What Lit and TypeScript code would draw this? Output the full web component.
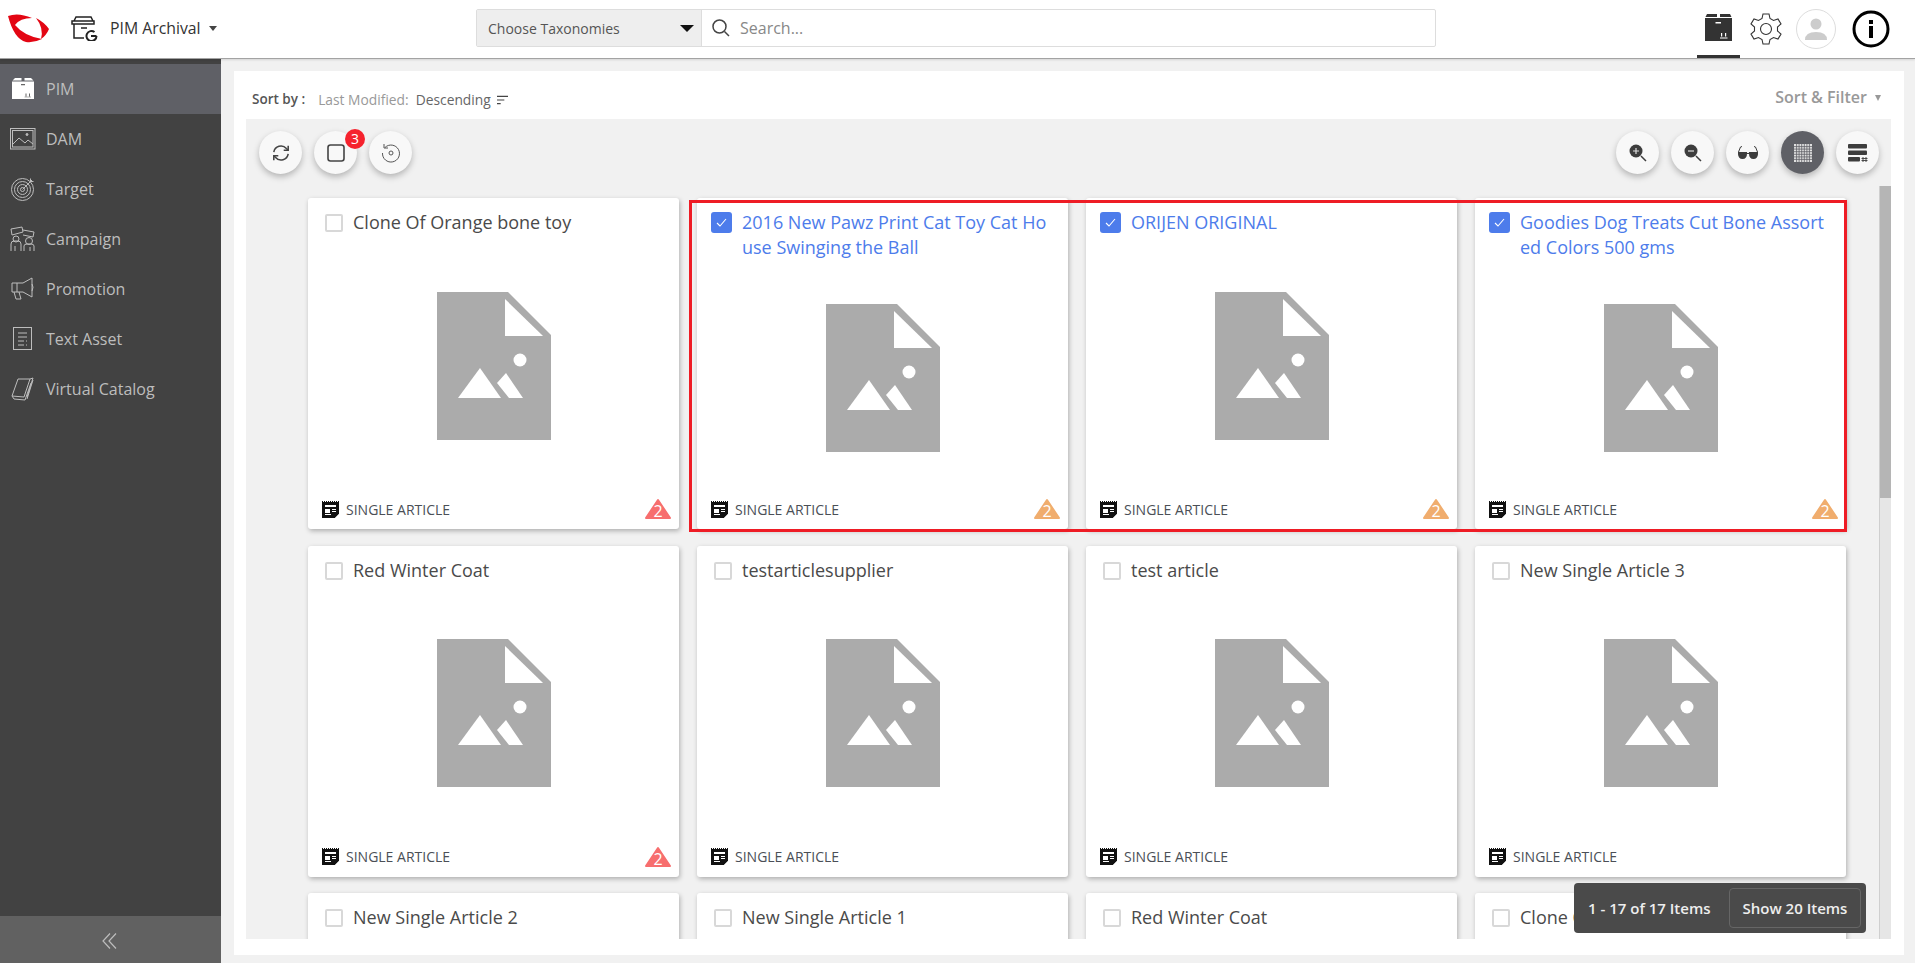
import { LitElement, html, css } from "lit";
import { customElement, property } from "lit/decorators.js";

const noImage = html`<svg class="noimg" viewBox="0 0 114 148" width="114" height="148">
  <path fill="#ababab" d="M0 0H71L114 43V148H0Z"/>
  <path fill="#fff" d="M68 7L106 44H68Z"/>
  <circle fill="#fff" cx="83" cy="68" r="6.5"/>
  <path fill="#fff" d="M21 106L43 76L64 106Z"/>
  <path fill="#fff" d="M60 91L69 81L86 106H72Z"/>
</svg>`;

const articleIcon = html`<svg viewBox="0 0 17 17" width="17" height="17">
  <path fill="#111" d="M0 1H17V13L13 17H0Z"/>
  <path d="M0 .5H17" stroke="#111" stroke-dasharray="1 1"/>
  <path fill="#fff" d="M3 4H14V6H3ZM3 8H8V12H3ZM10 8H14V9H10ZM10 10H14V11H10ZM3 13H9V14H3Z"/>
  <path fill="#fff" d="M17 13V17H13Z"/>
</svg>`;

@customElement("pim-card")
class PimCard extends LitElement {
  @property() name = "";
  @property({ type: Boolean }) selected = false;
  @property() badge = "";
  static styles = css`
    :host { display: block; }
    .card {
      height: 331px; background: #fff; border-radius: 3px;
      box-shadow: 1px 2px 5px rgba(0,0,0,.28);
      display: flex; flex-direction: column; box-sizing: border-box;
      font-family: "Open Sans", sans-serif;
    }
    .head { display: flex; gap: 10px; padding: 12px 18px 0 17px; }
    .box {
      flex: none; width: 18px; height: 18px; margin-top: 4px; box-sizing: border-box;
      border: 2px solid #d8d8d8; border-radius: 2px; background: #fff;
      display: flex; align-items: center; justify-content: center;
    }
    .sel .box { width: 21px; height: 21px; margin-top: 2px; margin-left: -3px; border: 0; background: #4d7ceb; border-radius: 3px; }
    .title { font-size: 18px; line-height: 25px; color: #4a4a4a; word-break: break-all; min-width: 0; font-weight: 400; }
    .sel .title { color: #4d7ceb; }
    .body { flex: 1; display: flex; align-items: center; justify-content: center; min-height: 0; }
    .foot { height: 33px; flex: none; display: flex; align-items: center; gap: 7px; padding: 0 8px 7px 14px; position: relative; box-sizing: border-box; }
    .type { font-size: 14px; color: #4b4f56; }
    .tri { position: absolute; right: 8px; top: 2px; width: 26px; height: 22px; }
    .tri span { position: absolute; inset: 4px 0 0 0; text-align: center; color: #fff; font-size: 16px; line-height: 18px; }
    svg { display: block; }
  `;
  render() {
    const col = this.badge === "red" ? "#f76e6e" : "#f0ad6e";
    return html`<div class="card ${this.selected ? "sel" : ""}">
      <div class="head">
        <div class="box">${this.selected ? html`<svg viewBox="0 0 21 21" width="21" height="21"><path d="M6 11l3 3 6-7" fill="none" stroke="#fff" stroke-width="1.1"/></svg>` : ""}</div>
        <div class="title">${this.name}</div>
      </div>
      <div class="body">${noImage}</div>
      <div class="foot">${articleIcon}<span class="type">SINGLE ARTICLE</span>
        ${this.badge ? html`<div class="tri"><svg viewBox="0 0 26 22" width="26" height="22"><path fill="${col}" stroke="${col}" stroke-width="2" stroke-linejoin="round" d="M13 2L25 20H1Z"/></svg><span>2</span></div>` : ""}
      </div>
    </div>`;
  }
}

const navIcons: Record<string, any> = {
  PIM: html`<svg viewBox="0 0 22 22" width="22" height="22"><path fill="#fff" d="M3 0H9.5V2.5H0.5ZM12.5 0H19L21.5 2.5H12.5ZM0 3.5H22V21H0Z"/><path fill="#666" d="M9 6H13V7.2H9ZM13.5 15.5h1v3h-1ZM17 15.5h1v3h-1ZM12.5 18.7h6.5v.6h-6.5Z"/></svg>`,
  DAM: html`<svg viewBox="0 0 26 22" width="26" height="22" fill="none" stroke="#bdbdbd" stroke-width="1"><rect x=".5" y=".5" width="24.5" height="20.5"/><rect x="2.5" y="2.5" width="20.500" height="16.500"/><path d="M3 16l6-6 6 5 3-3 5 4"/><circle cx="17" cy="6.500" r="1" fill="#bdbdbd"/></svg>`,
  Target: html`<svg viewBox="0 0 24 24" width="24" height="24" fill="none" stroke="#bdbdbd" stroke-width="1"><circle cx="11.500" cy="12.500" r="11"/><circle cx="11.500" cy="12.500" r="8"/><circle cx="11.500" cy="12.500" r="5"/><circle cx="11.500" cy="12.500" r="2"/><path d="M11.500 12.500L21 3M19.500 1.500v3h3"/></svg>`,
  Campaign: html`<svg viewBox="0 0 26 26" width="26" height="26" fill="none" stroke="#bdbdbd" stroke-width="1"><path d="M1 3l11-2 1 5-11 3zM13 4l11 2-1 5-10-2"/><circle cx="6" cy="13" r="3"/><circle cx="19" cy="15" r="3.500"/><path d="M1 25v-7q0-3 3-3h4q3 0 3 3v7M5 25v-5M14 25v-5q0-2 3-2h4q3 0 3 2v5M20 25v-4"/></svg>`,
  Promotion: html`<svg viewBox="0 0 24 24" width="24" height="24" fill="none" stroke="#bdbdbd" stroke-width="1"><path d="M1 6h11l9-5v19l-9-5H1zM6 6v9M3 15l2 7h5l-2-7"/><path d="M21 7q2 3 0 7"/></svg>`,
  "Text Asset": html`<svg viewBox="0 0 20 24" width="20" height="24" fill="none" stroke="#bdbdbd" stroke-width="1"><rect x=".5" y=".5" width="18" height="22"/><path d="M5 6h9M5 10h9M5 14h6M13 14h1M5 18h6M13 18h1"/></svg>`,
  "Virtual Catalog": html`<svg viewBox="0 0 24 24" width="24" height="24" fill="none" stroke="#bdbdbd" stroke-width="1"><path d="M7 2h12L13 20 1 19zM1 19l2 3 11 1 6-17M19 2l3-1-6 19M22 3l-6 19"/></svg>`,
};

const refreshIcon = html`<svg viewBox="0 0 20 20" width="18" height="18" fill="none" stroke="#444" stroke-width="1.700"><path d="M2 9a8 8 0 0 1 14-4l2 2M18 11a8 8 0 0 1-14 4l-2-2"/><path d="M18 2v5h-5M2 18v-5h5"/></svg>`;
const squareIcon = html`<svg viewBox="0 0 18 18" width="18" height="18"><rect x="1" y="1" width="16" height="16" rx="2.500" fill="none" stroke="#444" stroke-width="1.600"/></svg>`;
const historyIcon = html`<svg viewBox="0 0 20 20" width="20" height="20" fill="none" stroke="#555" stroke-width="1"><path d="M4 4.500A8.500 8.500 0 1 1 1.500 10"/><path d="M3 1v4h4"/><circle cx="10" cy="10" r="2"/></svg>`;
const zoomInIcon = html`<svg viewBox="0 0 18 18" width="18" height="18"><circle cx="7" cy="7" r="6.500" fill="#3d3d3d"/><path d="M12 12l5 5" stroke="#3d3d3d" stroke-width="1.500"/><path d="M4 7h6M7 4v6" stroke="#ddd" stroke-width="1.200"/></svg>`;
const zoomOutIcon = html`<svg viewBox="0 0 18 18" width="18" height="18"><circle cx="7" cy="7" r="6.500" fill="#3d3d3d"/><path d="M12 12l5 5" stroke="#3d3d3d" stroke-width="1.500"/><path d="M4 7h6" stroke="#ddd" stroke-width="1.200"/></svg>`;
const glassesIcon = html`<svg viewBox="0 0 20 13" width="20" height="13"><path fill="#3d3d3d" d="M0 6H9Q9.500 13 4.500 13Q-.5 13 0 6ZM11 6H20Q20.500 13 15.500 13Q10.500 13 11 6ZM8 7h4v1H8Z"/><path d="M.5 6L2.500 1L4 .5M19.500 6L17.500 1L16 .5" stroke="#3d3d3d" fill="none"/></svg>`;
const gridIcon = html`<svg viewBox="0 0 18 18" width="18" height="18"><rect width="18" height="18" fill="#e0e0e0"/><path d="M2.600 0v18M5.100 0v18M7.700 0v18M10.300 0v18M12.900 0v18M15.400 0v18M0 2.600h18M0 5.100h18M0 7.700h18M0 10.300h18M0 12.900h18M0 15.400h18" stroke="#5f6066" stroke-width=".8"/></svg>`;
const listIcon = html`<svg viewBox="0 0 20 18" width="20" height="18"><rect width="19" height="4.500" rx="1" fill="#3d3d3d"/><rect y="6.500" width="19" height="4.500" rx="1" fill="#3d3d3d"/><rect y="13" width="12" height="4.500" rx="1" fill="#3d3d3d"/><path d="M15 13v5M18 13v5M13.500 14.500h6M13.500 16.500h6" stroke="#3d3d3d" stroke-width=".9"/></svg>`;

@customElement("app-root")
class AppRoot extends LitElement {
  static styles = css`
    :host { display: flex; flex-direction: column; height: 963px; width: 1915px; overflow: hidden; font-family: "Open Sans", sans-serif; background: #f1f1f1; }
    svg { display: block; flex: none; }
    header { height: 59px; box-sizing: border-box; flex: none; background: #fff; border-bottom: 1px solid #a3a3a3; box-shadow: 0 1px 2px rgba(0,0,0,.12); display: flex; align-items: center; position: relative; z-index: 2; }
    .brand { width: 476px; display: flex; align-items: center; padding: 0 0 0 8px; box-sizing: border-box; margin-bottom: 2px; }
    .app-ico { margin-left: 21px; }
    .app-name { margin-left: 12px; font-size: 15.800px; color: #333; }
    .caret { margin-left: 8px; width: 0; height: 0; border: 4.500px solid transparent; border-top: 5px solid #444; border-bottom: 0; }
    .search { width: 960px; height: 38px; margin-bottom: 2px; box-sizing: border-box; border: 1px solid #ddd; border-radius: 2px; display: flex; align-items: stretch; }
    .tax { width: 225px; flex: none; background: #eee; border-right: 1px solid #ddd; display: flex; align-items: center; justify-content: space-between; padding: 0 6px 0 11px; box-sizing: border-box; font-size: 14px; color: #555; }
    .tax i { width: 0; height: 0; border: 7px solid transparent; border-top: 7px solid #111; border-bottom: 0; margin-right: 1px; }
    .q { display: flex; align-items: center; gap: 10px; padding-left: 10px; font-size: 16px; color: #888; }
    .tools { flex: 1; display: flex; align-items: center; height: 58px; padding-left: 261px; box-sizing: border-box; }
    .tab { width: 43px; height: 58px; box-sizing: border-box; border-bottom: 3px solid #333; display: flex; justify-content: center; align-items: center; }
    .gear { margin-left: 10px; }
    .avatar { margin-left: 14px; width: 40px; height: 40px; box-sizing: border-box; border: 1px solid #ddd; border-radius: 50%; display: flex; align-items: center; justify-content: center; }
    .info { margin-left: 16px; }
    .row { flex: 1; min-height: 0; display: flex; }
    aside { width: 221px; flex: none; background: #424242; display: flex; flex-direction: column; padding-top: 5px; }
    .nav { height: 50px; display: flex; align-items: center; font-size: 16px; color: #bdbdbd; }
    .nav.on { background: #5f6066; }
    .nav .ic { width: 46px; display: flex; justify-content: center; box-sizing: border-box; }
    .spacer { flex: 1; }
    .collapse { height: 47px; background: #616161; display: flex; align-items: center; justify-content: center; padding-right: 3px; padding-top: 2px; box-sizing: border-box; }
    main { flex: 1; min-width: 0; padding: 12px 11px 8px 13px; display: flex; }
    .panel { flex: 1; min-width: 0; background: #fff; padding: 0 13px 16px 12px; display: flex; flex-direction: column; }
    .sortbar { height: 48px; flex: none; display: flex; align-items: center; font-size: 14px; color: #555; padding-top: 8px; box-sizing: border-box; }
    .sortbar b { font-weight: 600; margin: 0 6px 0 6px; color: #555; font-size: 13.500px; }
    .sortbar .lm { margin-left: 7px; color: #999; font-size: 13.800px; }
    .sortbar .d { margin-left: 7px; color: #666; font-size: 13.800px; }
    .sortbar svg { margin-left: 6px; margin-top: 1px; }
    .sf { margin-left: auto; font-size: 16px; font-weight: 600; color: #999; display: flex; align-items: center; gap: 8px; padding-right: 10px; margin-top: -4px; }
    .sf i { width: 0; height: 0; border: 3.500px solid transparent; border-top: 6px solid #999; border-bottom: 0; margin-top: 2px; }
    .gray { flex: 1; min-height: 0; background: #f1f1f1; display: flex; flex-direction: column; position: relative; overflow: hidden; }
    .toolbar { height: 67px; flex: none; display: flex; padding: 12px 12px 0 13px; box-sizing: border-box; gap: 12px; }
    .btn { width: 43px; height: 43px; border-radius: 50%; background: #f8f8f8; box-shadow: 0 3px 6px rgba(0,0,0,.25); display: flex; align-items: center; justify-content: center; position: relative; }
    .btn.dark { background: #5f6066; }
    .push { margin-left: auto; }
    .count { position: absolute; top: -2px; right: -8px; width: 20px; height: 20px; border-radius: 50%; background: #f5222d; color: #fff; font-size: 14px; line-height: 20px; text-align: center; }
    .scrollrow { flex: 1; min-height: 0; display: flex; }
    .grid { flex: 1; min-width: 0; padding: 12px 33px 0 62px; display: grid; grid-template-columns: repeat(4, 371px); column-gap: 18px; row-gap: 16.500px; align-content: start; overflow: hidden; }
    .track { width: 12px; flex: none; box-sizing: border-box; background: #e6e6e6; border-left: 1px solid #cfcfcf; }
    .thumb { height: 312px; background: #b5b5b5; }
    .frame { position: absolute; left: 443px; top: 81px; width: 1158px; height: 332px; box-sizing: border-box; border: 3px solid #ee1c25; pointer-events: none; }
    .pager { position: absolute; left: 1328px; top: 764px; width: 292px; height: 50px; background: #4a4a4a; border-radius: 4px; display: flex; align-items: center; justify-content: space-between; padding: 0 5px 0 14px; box-sizing: border-box; color: #eee; font-size: 15px; font-weight: 600; }
    .pager span { width: 132px; height: 40px; box-sizing: border-box; border: 1px solid #666; border-radius: 4px; display: flex; align-items: center; justify-content: center; }
  `;
  render() {
    const navs = ["PIM", "DAM", "Target", "Campaign", "Promotion", "Text Asset", "Virtual Catalog"];
    const cards: [string, boolean, string][] = [
      ["Clone Of Orange bone toy", false, "red"],
      ["2016 New Pawz Print Cat Toy Cat House Swinging the Ball", true, "orange"],
      ["ORIJEN ORIGINAL", true, "orange"],
      ["Goodies Dog Treats Cut Bone Assorted Colors 500 gms", true, "orange"],
      ["Red Winter Coat", false, "red"],
      ["testarticlesupplier", false, ""],
      ["test article", false, ""],
      ["New Single Article 3", false, ""],
      ["New Single Article 2", false, ""],
      ["New Single Article 1", false, ""],
      ["Red Winter Coat", false, ""],
      ["Clone Of Orange bone toy", false, ""],
    ];
    return html`
      <header>
        <div class="brand">
          <svg viewBox="0 0 42 30" width="42" height="30"><path fill="#e30613" d="M0 3Q10 -1 24 5Q12 5 7 12Q16 23 34 26Q26 30 18 29Q6 26 0 3Z"/><path fill="#e30613" d="M28 5Q36 9 41 16Q38 23 33 26Q36 15 28 5Z"/></svg>
          <svg class="app-ico" viewBox="0 0 27 25" width="27" height="25" fill="none" stroke="#222" stroke-width="1.500"><path d="M3 5L5 1H20L22 5M1 5H23V8H1ZM3 8V22H13M10 12H16"/><path d="M25.500 20a5 5 0 1 1-2-4M20 20h5.500" stroke-width="2"/></svg>
          <span class="app-name">PIM Archival</span><i class="caret"></i>
        </div>
        <div class="search">
          <div class="tax">Choose Taxonomies<i></i></div>
          <div class="q"><svg viewBox="0 0 18 18" width="18" height="18" fill="none" stroke="#444" stroke-width="1.500"><circle cx="7.500" cy="7.500" r="6.500"/><path d="M12.500 12.500L17 17"/></svg>Search...</div>
        </div>
        <div class="tools">
          <div class="tab"><svg viewBox="0 0 27 28" width="27" height="28"><path fill="#333" d="M2 0H12V3H0.500ZM15 0H25L26.500 3H15ZM0 4H27V27H0Z"/><path fill="#fff" d="M10.500 8H16V9.500H10.500ZM16 19h1.200v3.500H16ZM20 19h1.200v3.500H20ZM15 23.500h7.500v1H15Z"/></svg></div>
          <svg class="gear" viewBox="0 0 32 32" width="32" height="32" fill="none" stroke="#333" stroke-width="1.100"><path d="M13 1H19L20 5.500L23.500 7.500L28 6L31 11L27.500 14V18L31 21L28 26L23.500 24.500L20 26.500L19 31H13L12 26.500L8.500 24.500L4 26L1 21L4.500 18V14L1 11L4 6L8.500 7.500L12 5.500Z"/><circle cx="16" cy="16" r="5.500"/></svg>
          <div class="avatar"><svg viewBox="0 0 22 24" width="22" height="24"><circle cx="11" cy="7" r="5.500" fill="#ccc"/><path d="M0 23Q0 15 11 15Q22 15 22 23Z" fill="#ccc"/></svg></div>
          <svg class="info" viewBox="0 0 38 38" width="38" height="38"><circle cx="19" cy="19" r="17" fill="#fff" stroke="#000" stroke-width="3"/><rect x="17" y="16" width="4" height="12" fill="#000"/><rect x="17" y="10" width="4" height="4" fill="#000"/></svg>
        </div>
      </header>
      <div class="row">
        <aside>
          ${navs.map(n => html`<div class="nav ${n === "PIM" ? "on" : ""}"><div class="ic">${navIcons[n]}</div>${n}</div>`)}
          <div class="spacer"></div>
          <div class="collapse"><svg viewBox="0 0 15 16" width="15" height="16" fill="none" stroke="#bdbdbd" stroke-width="1.200"><path d="M8 .5L1 8l7 7.500M14 .5L7 8l7 7.500"/></svg></div>
        </aside>
        <main>
          <div class="panel">
            <div class="sortbar"><b>Sort by :</b><span class="lm">Last Modified:</span><span class="d">Descending</span>
              <svg viewBox="0 0 12 10" width="11" height="10"><path d="M0 1h12M0 5h8M0 9h4" stroke="#444" stroke-width="1.300"/></svg>
              <div class="sf">Sort &amp; Filter<i></i></div>
            </div>
            <div class="gray">
              <div class="toolbar">
                <div class="btn">${refreshIcon}</div>
                <div class="btn">${squareIcon}<div class="count">3</div></div>
                <div class="btn">${historyIcon}</div>
                <div class="btn push">${zoomInIcon}</div>
                <div class="btn">${zoomOutIcon}</div>
                <div class="btn">${glassesIcon}</div>
                <div class="btn dark">${gridIcon}</div>
                <div class="btn">${listIcon}</div>
              </div>
              <div class="scrollrow">
                <div class="grid">
                  ${cards.map(c => html`<pim-card .name=${c[0]} .selected=${c[1]} .badge=${c[2]}></pim-card>`)}
                </div>
                <div class="track"><div class="thumb"></div></div>
              </div>
              <div class="frame"></div>
              <div class="pager">1 - 17 of 17 Items<span>Show 20 Items</span></div>
            </div>
          </div>
        </main>
      </div>
    `;
  }
}
